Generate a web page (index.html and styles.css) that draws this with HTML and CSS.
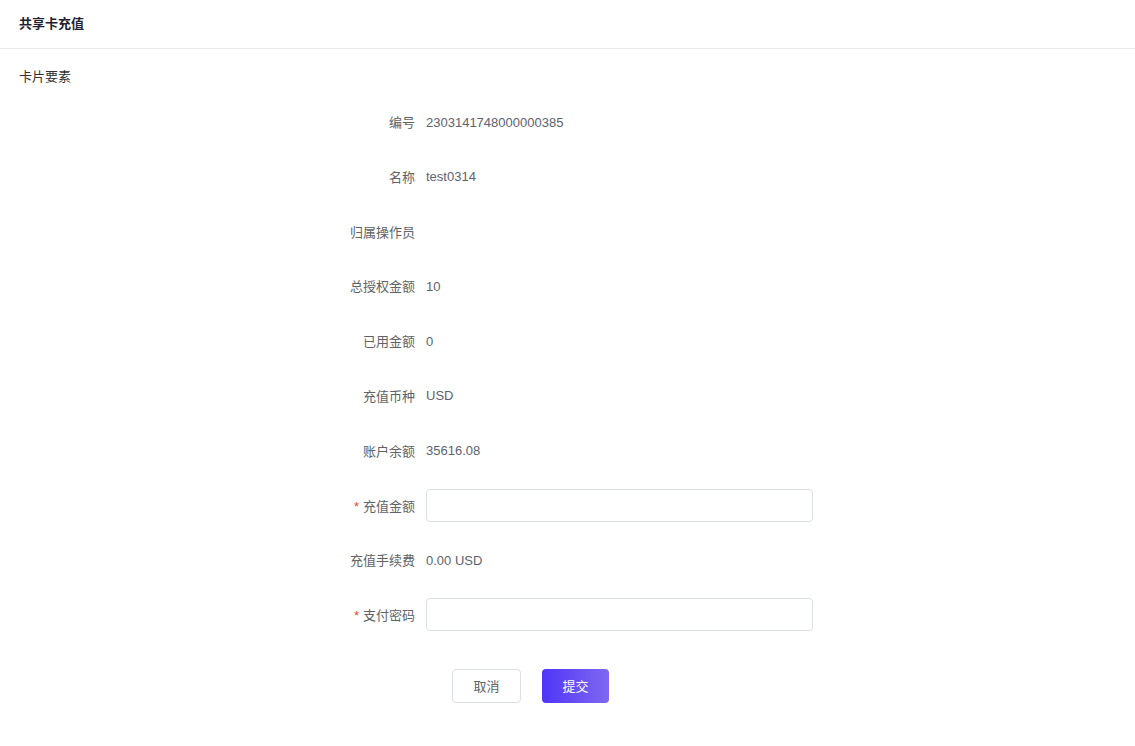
FILE: index.html
```html
<!DOCTYPE html>
<html lang="zh">
<head>
<meta charset="utf-8">
<title>共享卡充值</title>
<link rel="stylesheet" href="styles.css">
</head>
<body>
<div class="page">
  <header class="header">共享卡充值</header>
  <section class="section">
    <h2 class="section-title">卡片要素</h2>
    <form class="form">
      <div class="item"><label class="label">编号</label><div class="value">2303141748000000385</div></div>
      <div class="item"><label class="label">名称</label><div class="value">test0314</div></div>
      <div class="item"><label class="label">归属操作员</label><div class="value"></div></div>
      <div class="item"><label class="label">总授权金额</label><div class="value">10</div></div>
      <div class="item"><label class="label">已用金额</label><div class="value">0</div></div>
      <div class="item"><label class="label">充值币种</label><div class="value">USD</div></div>
      <div class="item"><label class="label">账户余额</label><div class="value">35616.08</div></div>
      <div class="item"><label class="label"><span class="req">*</span>充值金额</label><div class="value"><input class="input" type="text"></div></div>
      <div class="item"><label class="label">充值手续费</label><div class="value">0.00 USD</div></div>
      <div class="item"><label class="label"><span class="req">*</span>支付密码</label><div class="value"><input class="input" type="password"></div></div>
      <div class="actions">
        <button type="button" class="btn btn-default">取消</button>
        <button type="button" class="btn btn-primary">提交</button>
      </div>
    </form>
  </section>
</div>
</body>
</html>
```

FILE: styles.css
```css
* { box-sizing: border-box; }
html, body { margin: 0; padding: 0; background: #fff; }
body {
  font-family: "Noto Sans CJK SC", "Liberation Sans", Arial, sans-serif;
  font-size: 13px;
  color: #606266;
}
.header {
  height: 49px;
  line-height: 46px;
  padding-left: 19px;
  font-weight: bold;
  font-size: 13px;
  color: #1f2133;
  border-bottom: 1px solid #e8e8ec;
}
.section { padding: 0 19px; }
.section-title {
  margin: 0;
  padding-top: 17px;
  height: 56px;
  font-size: 13px;
  font-weight: normal;
  color: #303133;
  line-height: 20px;
}
.form { display: flex; flex-direction: column; }
.item {
  display: flex;
  align-items: center;
  height: 33px;
  margin-bottom: 21.8px;
}
.label {
  width: 407px;
  text-align: right;
  padding-right: 11px;
  color: #606266;
  font-family: "Noto Sans CJK SC", sans-serif;
}
.req { color: #f0462c; margin-right: 4px; font-family: "Liberation Sans", sans-serif; }
.value {
  font-family: "Liberation Sans", Arial, sans-serif;
  font-size: 13px;
  color: #5d6270;
  padding-top: 1px;
}
.input {
  width: 387px;
  height: 33px;
  border: 1px solid #dcdfe6;
  border-radius: 4px;
  outline: none;
  padding: 0 12px;
  background: #fff;
  display: block;
  margin-top: -1px;
}
.actions {
  display: flex;
  gap: 21px;
  padding-left: 433px;
  margin-top: 16px;
}
.btn {
  height: 34px;
  border-radius: 4px;
  font-size: 13px;
  font-family: "Noto Sans CJK SC", sans-serif;
  cursor: pointer;
}
.btn-default {
  width: 69px;
  background: #fff;
  border: 1px solid #dcdfe6;
  color: #606266;
}
.btn-primary {
  width: 67px;
  border: none;
  color: #fff;
  background: linear-gradient(90deg, #4f35f6, #8068f1);
}
```
